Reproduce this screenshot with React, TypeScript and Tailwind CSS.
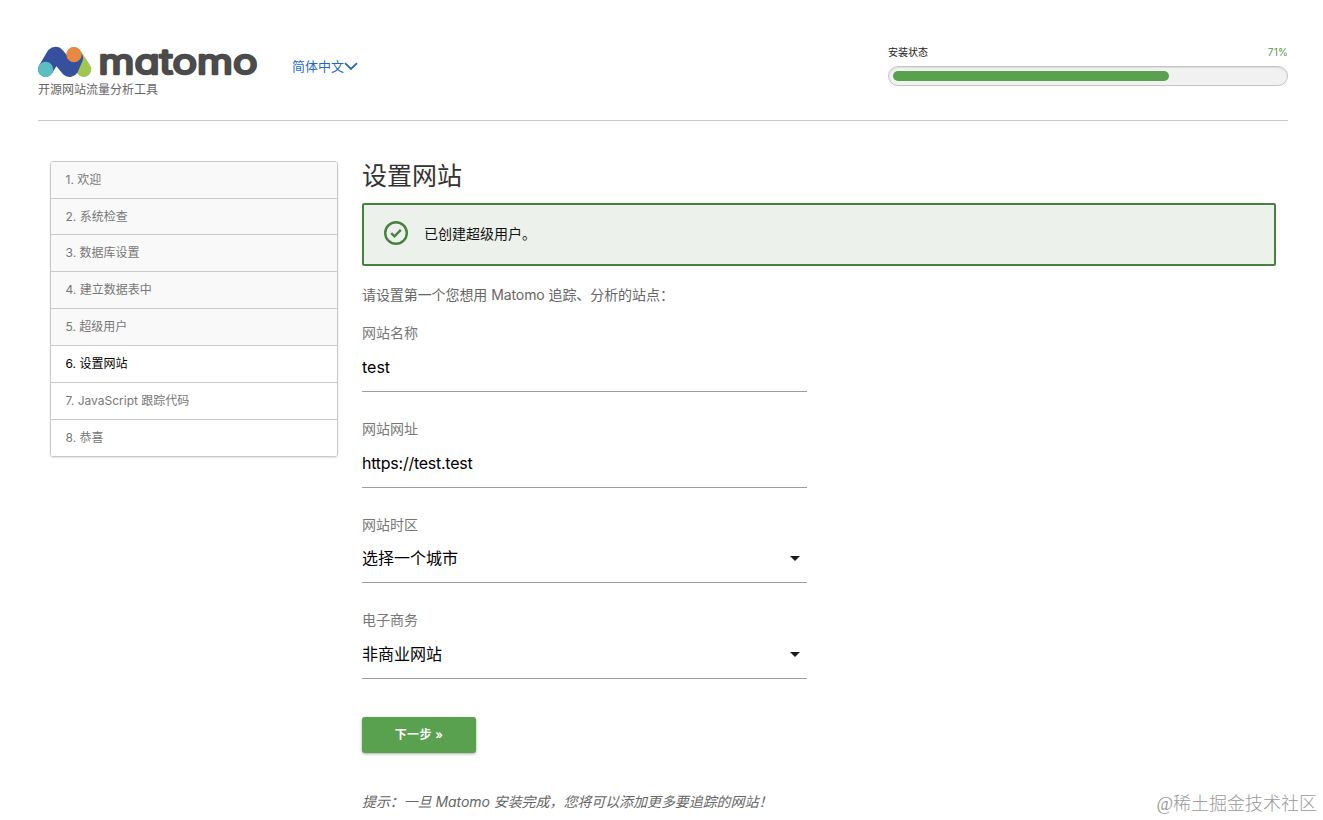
import React, { useState } from 'react';

interface Step {
  id: number;
  label: string;
}

const steps: Step[] = [
  { id: 1, label: '欢迎' },
  { id: 2, label: '系统检查' },
  { id: 3, label: '数据库设置' },
  { id: 4, label: '建立数据表中' },
  { id: 5, label: '超级用户' },
  { id: 6, label: '设置网站' },
  { id: 7, label: 'JavaScript 跟踪代码' },
  { id: 8, label: '恭喜' },
];

const CURRENT_STEP = 6;
const PROGRESS = 71;

const MatomoLogo: React.FC = () => (
  <svg className="block overflow-visible" width="222" height="36" viewBox="0 0 222 36" role="img" aria-label="matomo">
    <g strokeWidth="15.2" strokeLinecap="round" strokeLinejoin="round" fill="none">
      <path d="M36 10.7 L45.7 25.3" stroke="#9fc751" />
      <path d="M7.6 25.3 L16 11.2 Q17.6 9.6 19 11.2 L30.5 25 Q32 26 33 24.5 L37.5 14" stroke="#35519e" />
    </g>
    <circle cx="7.6" cy="25.3" r="7.6" fill="#5bbfc0" />
    <circle cx="36" cy="10.7" r="7.6" fill="#e98842" />
    <text
      x="60.5"
      y="29.7"
      fill="#4b4b4b"
      stroke="#4b4b4b"
      strokeWidth="2.5"
      strokeLinecap="round"
      strokeLinejoin="round"
      textLength="159"
      lengthAdjust="spacingAndGlyphs"
      className="font-['Inter',sans-serif] text-[34.5px] font-normal [font-feature-settings:'cv11']"
    >
      matomo
    </text>
  </svg>
);

const Header: React.FC = () => (
  <header className="mr-[35px] ml-[38px] flex h-[121px] items-start justify-between border-b border-[#c9c9c9]">
    <div className="flex">
      <div className="pt-[44px]">
        <MatomoLogo />
        <p className="mt-px text-xs leading-[18px] text-[#666]">开源网站流量分析工具</p>
      </div>
      <a href="#" className="ml-[32px] mt-[56px] flex h-5 items-center text-[13px] text-[#1e68c6]">
        <span className="pt-px">简体中文</span>
        <svg width="14" height="9" viewBox="0 0 14 9" fill="none" stroke="currentColor" strokeWidth="1.8">
          <path d="M1 1.2 L7 7 L13 1.2" />
        </svg>
      </a>
    </div>

    {/* Progress */}
    <div className="w-[400px] pt-[45px]">
      <div className="flex h-[15px] items-center justify-between text-[10px]">
        <span className="text-[#222]">安装状态</span>
        <span className="tracking-[0.2px] text-[#57994d]">{PROGRESS}%</span>
      </div>
      <div className="mt-[6px] h-5 rounded-full border border-[#c4c4c4] bg-[#f1f1f1] px-1 py-[4px] shadow-[inset_0_1px_1px_#ddd]">
        <div className="h-[10px] rounded-full bg-[#5aa14f]" style={{ width: `${PROGRESS - 0.3}%` }} />
      </div>
    </div>
  </header>
);

const StepList: React.FC = () => (
  <ul className="mt-[39.65px] w-72 self-start overflow-hidden rounded-[3px] border border-[#c9c9c9] text-xs shadow-[0_1px_2px_rgba(0,0,0,0.12)]">
    {steps.map((step) => (
      <li
        key={step.id}
        className={`flex h-[36.9px] items-center border-b border-[#c9c9c9] px-[14.5px] pt-[0.2px] last:h-[35.9px] last:border-b-0 ${
          step.id < CURRENT_STEP ? 'bg-[#f9f9f9]' : 'bg-white'
        } ${step.id === CURRENT_STEP ? 'text-black' : 'text-[#777]'}`}
      >
        {step.id}. {step.label}
      </li>
    ))}
  </ul>
);

interface FieldProps {
  label: string;
  children: React.ReactNode;
}

const Field: React.FC<FieldProps> = ({ label, children }) => (
  <div className="mb-[24.65px] h-[71px] w-[445px]">
    <div className="flex h-6 items-center pt-[0.4px] text-sm text-[#777]">{label}</div>
    <div className="flex h-[47px] items-center border-b border-[#9e9e9e] pb-[2px] text-base text-black">{children}</div>
  </div>
);

const SelectValue: React.FC<{ value: string }> = ({ value }) => (
  <div className="flex w-full items-center justify-between pr-[7px]">
    <span>{value}</span>
    <svg className="mt-px" width="10" height="5" viewBox="0 0 10 5">
      <path d="M0 0h10L5 5z" fill="#1c1c1c" />
    </svg>
  </div>
);

const SetupForm: React.FC = () => {
  const [name, setName] = useState('test');
  const [url, setUrl] = useState('https://test.test');

  return (
    <main className="w-[914px] pt-[37px]">
      <h2 className="h-[45px] text-[25px] leading-[36px] text-[#333]">设置网站</h2>

      {/* Notification */}
      <div className="flex h-[63px] items-center rounded-[2px] border-2 border-[#47803f] bg-[#ecf2eb] pb-[3px] pl-5 text-sm text-[#111]">
        <svg width="24" height="24" viewBox="0 0 24 24" fill="none" stroke="#47803f" strokeWidth="2.4">
          <circle cx="12" cy="12" r="10.8" />
          <path d="M7.2 12.2 L10.5 15.3 L16.8 8.9" />
        </svg>
        <span className="ml-4 pt-px">已创建超级用户。</span>
      </div>

      <p className="mt-[18px] mb-[15.1px] h-[22px] text-sm leading-[22px] tracking-[-0.08px] text-[#666]">
        请设置第一个您想用 Matomo 追踪、分析的站点：
      </p>

      <Field label="网站名称">
        <input className="w-full outline-none" value={name} onChange={(e) => setName(e.target.value)} />
      </Field>
      <Field label="网站网址">
        <input
          className="w-full tracking-[-0.25px] outline-none"
          value={url}
          onChange={(e) => setUrl(e.target.value)}
        />
      </Field>
      <Field label="网站时区">
        <SelectValue value="选择一个城市" />
      </Field>
      <Field label="电子商务">
        <SelectValue value="非商业网站" />
      </Field>

      <button className="mt-[37.9px] block h-9 w-[114px] rounded-[3px] bg-[#5aa14f] text-xs font-semibold tracking-[0.4px] text-white shadow-[0_1px_3px_rgba(0,0,0,0.35)]">
        下一步 »
      </button>

      <p className="mt-[38px] h-[22px] text-sm italic leading-[22px] tracking-[-0.07px] text-[#666]">
        提示：一旦 Matomo 安装完成，您将可以添加更多要追踪的网站！
      </p>
    </main>
  );
};

export default function App() {
  return (
    <div
      lang="zh-CN"
      className="relative h-[820px] w-[1323px] overflow-hidden bg-white font-['Inter','Noto_Sans_CJK_SC',sans-serif]"
    >
      <Header />
      <div className="flex gap-6 pl-[50px]">
        <StepList />
        <SetupForm />
      </div>

      {/* Watermark */}
      <div className="absolute bottom-[4px] right-[6px] font-['Liberation_Serif','Noto_Sans_CJK_SC',serif] text-[18px] font-light leading-[24px] text-[#999]">
        @稀土掘金技术社区
      </div>
    </div>
  );
}
